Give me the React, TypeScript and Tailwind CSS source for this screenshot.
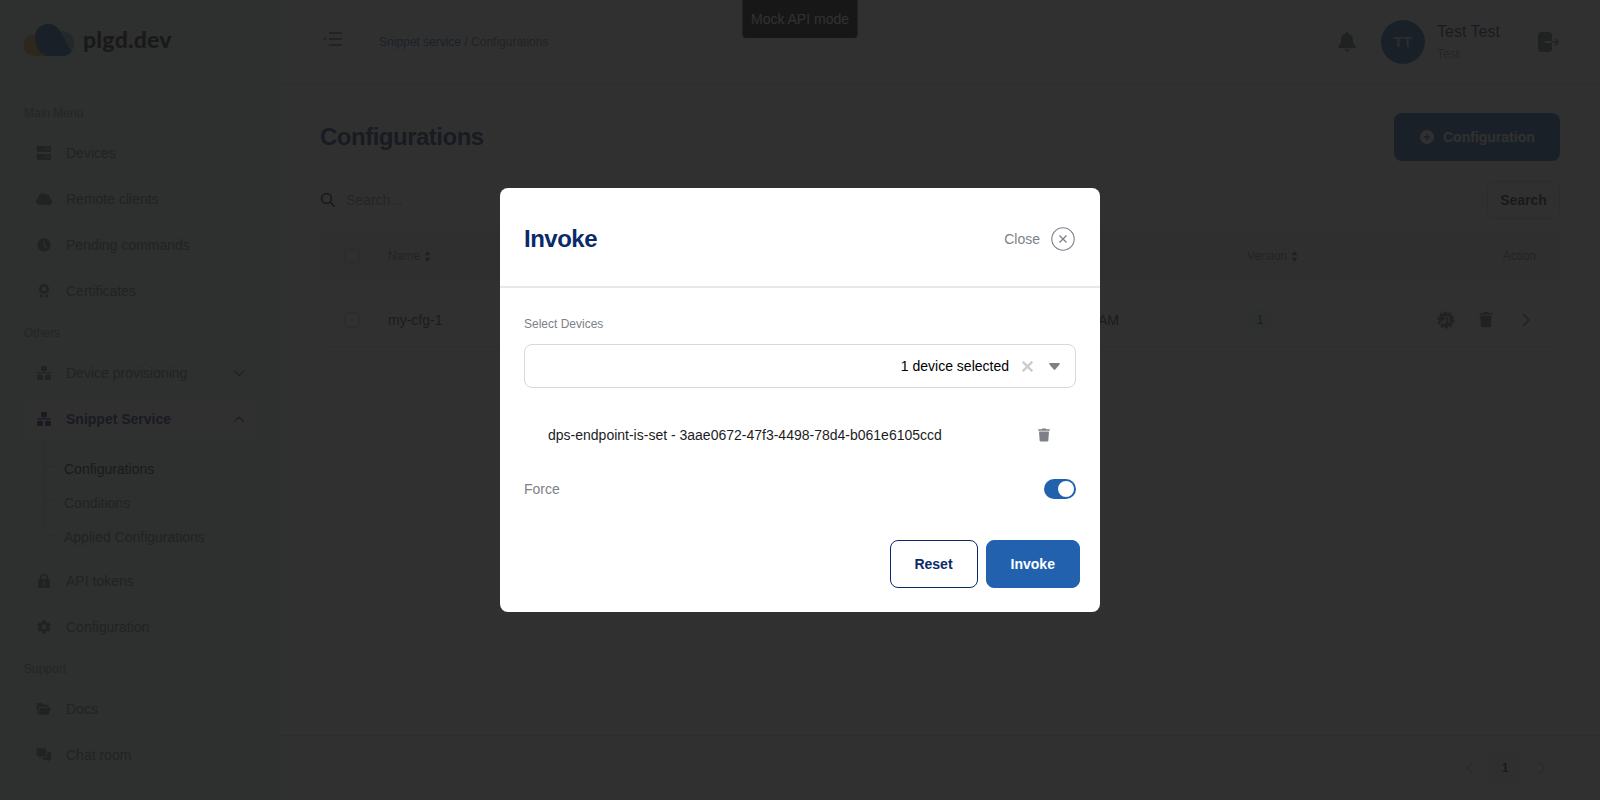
import React from 'react';

type IconProps = { className?: string };

const ServerIcon = ({ className }: IconProps) => (
  <svg width="16" height="16" viewBox="0 0 16 16" className={className}>
    <path
      fill="currentColor"
      fillRule="evenodd"
      d="M2 1h11.6a1.4 1.4 0 0 1 1.4 1.4v3.2A1.4 1.4 0 0 1 13.6 7H2A1.4 1.4 0 0 1 .6 5.600V2.400A1.400 1.400 0 0 1 2 1zm7.700 2.300v1.300H11V3.300zm2.300 0v1.300h1.300V3.300zM2 9h11.600A1.400 1.400 0 0 1 15 10.400v3.200a1.400 1.400 0 0 1-1.400 1.400H2a1.400 1.400 0 0 1-1.400-1.400v-3.200A1.400 1.400 0 0 1 2 9zm7.700 2.300v1.300H11v-1.300zm2.300 0v1.300h1.300v-1.300z"
    />
  </svg>
);

const CloudIcon = ({ className }: IconProps) => (
  <svg width="16" height="16" viewBox="0 0 16 16" className={className}>
    <path
      fill="currentColor"
      d="M3.800 14A3.700 3.700 0 0 1 2.100 7a4.500 4.500 0 0 1 7.600-3.500 3 3 0 0 1 4.100 3.700A3.500 3.500 0 0 1 12.600 14z"
    />
  </svg>
);

const ClockIcon = ({ className }: IconProps) => (
  <svg width="16" height="16" viewBox="0 0 16 16" className={className}>
    <path
      fill="currentColor"
      fillRule="evenodd"
      d="M8 1.300a6.700 6.700 0 1 1 0 13.400A6.700 6.700 0 0 1 8 1.300zM7.400 4v4.400l2.700 2.700.9-.9L8.600 7.900V4z"
    />
  </svg>
);

const CertificateIcon = ({ className }: IconProps) => (
  <svg width="16" height="16" viewBox="0 0 16 16" className={className}>
    <circle cx="8" cy="6" r="3.700" fill="none" stroke="currentColor" strokeWidth="2.800" />
    <path fill="currentColor" d="M4.300 11l3 1.500-1.300 2.500-1.200-.8-1.700.5zM11.700 11l-3 1.500 1.300 2.500 1.200-.8 1.700.5z" />
  </svg>
);

const NetworkIcon = ({ className }: IconProps) => (
  <svg width="16" height="16" viewBox="0 0 16 16" className={className}>
    <g fill="currentColor">
      <rect x="5" y="1" width="6" height="5" rx="1" />
      <rect x="1" y="10" width="6" height="5" rx="1" />
      <rect x="9" y="10" width="6" height="5" rx="1" />
      <path d="M7.400 6h1.200v1.300H15v1.200h-2.400V10h-1.200V8.500H4.600V10H3.400V8.500H1V7.300h6.400z" />
    </g>
  </svg>
);

const LockIcon = ({ className }: IconProps) => (
  <svg width="16" height="16" viewBox="0 0 16 16" className={className}>
    <path fill="none" stroke="currentColor" strokeWidth="1.600" d="M4.800 7V4.800a3.200 3.200 0 0 1 6.400 0V7" />
    <path
      fill="currentColor"
      fillRule="evenodd"
      d="M3.500 6h9A1.500 1.500 0 0 1 14 7.500v6a1.500 1.500 0 0 1-1.500 1.500h-9A1.500 1.500 0 0 1 2 13.500v-6A1.500 1.500 0 0 1 3.500 6zM8 8.500a1 1 0 0 0-.6 1.800v1.900h1.200v-1.900A1 1 0 0 0 8 8.500z"
    />
  </svg>
);

const GearIcon = ({ className }: IconProps) => (
  <svg width="16" height="16" viewBox="0 0 16 16" className={className}>
    <path
      fill="currentColor"
      fillRule="evenodd"
      d="M6.500 1.300h3l.5 1.900 1.200.7 1.900-.5 1.500 2.600-1.400 1.300v1.400l1.400 1.300-1.500 2.600-1.900-.5-1.200.7-.5 1.900h-3L6 12.800l-1.200-.7-1.900.5-1.500-2.600 1.400-1.300V7.300L1.400 6l1.500-2.600 1.900.5L6 3.200zM8 5.600a2.400 2.400 0 1 0 0 4.800 2.400 2.400 0 0 0 0-4.800z"
    />
  </svg>
);

const FolderIcon = ({ className }: IconProps) => (
  <svg width="16" height="16" viewBox="0 0 16 16" className={className}>
    <path fill="currentColor" d="M.7 12V3.300A1.300 1.300 0 0 1 2 2h3.500l1.700 1.700h4.600A1.200 1.200 0 0 1 13 5v.8H5a2.200 2.200 0 0 0-1.900 1.100z" />
    <path fill="currentColor" d="M5 6.700h10.300L12.700 13a1.200 1.200 0 0 1-1.100.7H1.200l2.700-6.300A1.200 1.200 0 0 1 5 6.700z" />
  </svg>
);

const ChatIcon = ({ className }: IconProps) => (
  <svg width="16" height="16" viewBox="0 0 16 16" className={className}>
    <path fill="currentColor" d="M1.800 1.200h7A1.200 1.200 0 0 1 10 2.400V8a1.200 1.200 0 0 1-1.200 1.200H5.900L3.200 11.300V9.200H1.800A1.200 1.200 0 0 1 .6 8V2.400a1.200 1.200 0 0 1 1.200-1.200z" />
    <path fill="currentColor" d="M11 4.700h2.900A1.200 1.200 0 0 1 15.100 6v5.500a1.200 1.200 0 0 1-1.200 1.200h-.8v2.100l-2.800-2.100H7.600a1.200 1.200 0 0 1-1.200-1.200v-1.300H9a2 2 0 0 0 2-2z" />
  </svg>
);

const Chevron = ({ d, size = 12 }: { d: string; size?: number }) => (
  <svg width={size} height={size} viewBox="0 0 12 12" fill="none" stroke="currentColor" strokeWidth="1.500" strokeLinecap="round" strokeLinejoin="round">
    <path d={d} />
  </svg>
);

const TrashIcon = ({ className }: IconProps) => (
  <svg viewBox="0 0 14 16" className={className}>
    <path fill="currentColor" d="M.3 1.400h4L5 .3h4l.7 1.100h4V3H.3zM1.200 4h11.600l-.7 10.500a1.300 1.300 0 0 1-1.300 1.200H3.200a1.300 1.300 0 0 1-1.300-1.200z" />
  </svg>
);

const SortIcon = ({ active }: { active?: boolean }) => (
  <svg width="7" height="11" viewBox="0 0 7 11">
    <path d="M3.500 0L6.700 4.300H.3z" className={active ? 'fill-[#0a7fc4]' : 'fill-[#5b6167]'} />
    <path d="M3.500 11L.3 6.700h6.400z" className="fill-[#5b6167]" />
  </svg>
);

const Logo = () => (
  <svg width="50" height="32" viewBox="0 0 50 32">
    <path fill="#e0a23c" d="M10 10.500h14V32H10.500A10.700 10.700 0 0 1 10 10.500z" />
    <path fill="#7fb0c8" d="M38 7a12.500 12.500 0 0 1 12 12.500c0 5-2 8-5.500 10.500L30 10z" />
    <path fill="#1f5ba5" d="M24 0c5.500 0 9.500 2.700 12 7l11.500 20.500C45.500 30.500 42.500 32 39 32H25C17 32 11 24 11 13 11 5.500 17 0 24 0z" />
  </svg>
);

type NavItemProps = {
  icon: React.ReactNode;
  label: string;
  active?: boolean;
  chevron?: 'up' | 'down';
};

const NavItem = ({ icon, label, active, chevron }: NavItemProps) => (
  <a
    className={
      active
        ? 'flex h-10 items-center rounded-lg bg-white pl-3 pr-[11px] text-sm font-bold text-[#0a2a69]'
        : 'flex h-10 items-center rounded-lg pl-3 pr-[11px] text-sm text-[#6a7077]'
    }
  >
    {icon}
    <span className="ml-[14px] flex-1">{label}</span>
    {chevron && (
      <span className="text-[#6a7077]">
        <Chevron d={chevron === 'up' ? 'M1.500 8.500L6 4l4.500 4.500' : 'M1.500 4L6 8.500L10.500 4'} />
      </span>
    )}
  </a>
);

const NavLabel = ({ children }: { children: React.ReactNode }) => (
  <div className="h-[42px] pt-[14px] text-xs leading-4 text-[#858a8e]">{children}</div>
);

const Sidebar = () => (
  <aside className="flex h-full w-[280px] shrink-0 flex-col bg-[#e6f5ee] px-6">
    <div className="flex h-[91px] shrink-0 items-start pt-6">
      <Logo />
      <span className="ml-[9px] mt-px font-['Lato'] text-[23px] font-black leading-7 tracking-[0.200px] text-[#1c1c1e]">plgd.dev</span>
    </div>
    <NavLabel>Main Menu</NavLabel>
    <nav className="flex flex-col gap-[6px]">
      <NavItem icon={<ServerIcon />} label="Devices" />
      <NavItem icon={<CloudIcon />} label="Remote clients" />
      <NavItem icon={<ClockIcon />} label="Pending commands" />
      <NavItem icon={<CertificateIcon />} label="Certificates" />
    </nav>
    <NavLabel>Others</NavLabel>
    <nav className="flex flex-col gap-[6px]">
      <NavItem icon={<NetworkIcon />} label="Device provisioning" chevron="down" />
      <NavItem icon={<NetworkIcon />} label="Snippet Service" active chevron="up" />
    </nav>
    <div className="flex h-[122px] shrink-0 pl-5">
      <svg width="20" height="110" viewBox="0 0 20 110" fill="none" stroke="#c6cecb">
        <path d="M.5 0v91q0 5 5 5H12M.5 22q0 5.500 5 5.500H12M.5 56q0 5.500 5 5.500H12" />
      </svg>
      <div className="pt-[13px] text-sm text-[#6a7077]">
        <div className="flex h-[34px] items-center text-[#1c1c1e]">Configurations</div>
        <div className="flex h-[34px] items-center">Conditions</div>
        <div className="flex h-[34px] items-center">Applied Configurations</div>
      </div>
    </div>
    <nav className="flex flex-col gap-[6px]">
      <NavItem icon={<LockIcon />} label="API tokens" />
      <NavItem icon={<GearIcon />} label="Configuration" />
    </nav>
    <NavLabel>Support</NavLabel>
    <nav className="flex flex-col gap-[6px]">
      <NavItem icon={<FolderIcon />} label="Docs" />
      <NavItem icon={<ChatIcon />} label="Chat room" />
    </nav>
  </aside>
);

const Header = () => (
  <header className="flex h-[85px] shrink-0 items-center border-b border-[#d9dcdf] pl-[43px] pr-10">
    <svg width="20" height="14" viewBox="0 0 20 14" className="mb-[6px] text-[#71777d]">
      <path d="M3 4.500v5L.3 7z" fill="currentColor" />
      <path d="M6 1h13M6 7h13M6 13h13" stroke="currentColor" strokeWidth="1.800" />
    </svg>
    <div className="ml-9 text-xs text-[#6a7077]">
      <span className="text-[#1f66c0]">Snippet service</span>
      <span className="text-[#303236]"> / </span>
      <span>Configurations</span>
    </div>
    <div className="ml-auto flex items-center">
      <svg width="18" height="20" viewBox="0 0 18 20" className="text-[#5f6e6a]">
        <path fill="currentColor" d="M9 0c.9 0 1.400.6 1.400 1.400C13.300 2 15 4.300 15 7.300v3.500l2.700 3.400c.5.800.3 2-.9 2H1.200c-1.200 0-1.400-1.200-.9-2L3 10.800V7.300c0-3 1.700-5.300 4.600-5.900C7.600.6 8.100 0 9 0zM6.400 17.600h5.200c-.4 1.300-1.300 2.100-2.600 2.100s-2.200-.8-2.600-2.100z" />
      </svg>
      <div className="ml-[25px] flex h-11 w-11 items-center justify-center rounded-full bg-[#2161ae] text-[15px] font-bold text-[#c9d6e6]">TT</div>
      <div className="ml-3 w-[63px] whitespace-nowrap">
        <div className="text-base leading-5 text-[#0a2a69]">Test Test</div>
        <div className="mt-1 text-xs leading-4 text-[#858a8e]">Test</div>
      </div>
      <svg width="22" height="20" viewBox="0 0 22 20" className="ml-[38px] text-[#5f6e6a]">
        <path fill="currentColor" d="M3.500 0h7A3.500 3.500 0 0 1 14 3.500V9H7v2h7v5.500a3.500 3.500 0 0 1-3.500 3.500h-7A3.500 3.500 0 0 1 0 16.500v-13A3.500 3.500 0 0 1 3.500 0z" />
        <path fill="none" stroke="currentColor" strokeWidth="1.700" strokeLinecap="round" strokeLinejoin="round" d="M14 10h6M17.300 7l3 3-3 3" />
      </svg>
    </div>
  </header>
);

const Checkbox = () => <span className="block h-4 w-4 rounded border border-[#c9cdd0]" />;

const Table = () => (
  <div className="mt-3">
    <div className="flex h-[50px] items-center rounded-lg bg-[#f5f6f7] pl-6 pr-6 text-xs text-[#777c81]">
      <Checkbox />
      <div className="ml-7 flex w-[859px] items-center gap-1">
        Name <SortIcon active />
      </div>
      <div className="flex items-center gap-1">
        Version <SortIcon />
      </div>
      <div className="ml-auto">Action</div>
    </div>
    <div className="mx-2 flex h-[66px] items-center border-b border-[#dfe2e4] pl-4 pr-[19px] pt-[13px] pb-[1px] text-sm">
      <Checkbox />
      <div className="ml-7 w-[532px] text-[#303236]">my-cfg-1</div>
      <div className="w-[199px] text-right text-[#303236]">9/4/2024 11:24 AM</div>
      <div className="ml-[127px] flex h-[21px] w-7 items-center justify-center rounded-full bg-[#eceeef] text-xs text-[#303236]">1</div>
      <div className="ml-auto flex items-center text-[#5f6e6a]">
        <svg width="18" height="18" viewBox="0 0 18 18">
          <circle cx="9" cy="9" r="7.600" fill="none" stroke="currentColor" strokeWidth="2" strokeDasharray="3.200 1.575" />
          <circle cx="9" cy="9" r="7" fill="currentColor" />
          <path d="M3.500 12.500L8.500 8M6.500 6H12v6M9.500 9L6 13" fill="none" stroke="#ffffff" strokeWidth="1.200" />
        </svg>
        <TrashIcon className="ml-6 h-[17px] w-[14px]" />
        <span className="ml-[26px]">
          <Chevron d="M4 1.500L8.500 6L4 10.500" size={14} />
        </span>
      </div>
    </div>
  </div>
);

const MainContent = () => (
  <main className="flex min-w-0 flex-1 flex-col bg-white">
    <Header />
    <div className="flex-1 px-10 pt-7">
      <div className="flex h-12 items-center justify-between">
        <h1 className="text-2xl font-bold tracking-[-0.500px] text-[#0a2a69]">Configurations</h1>
        <button className="flex h-12 w-[166px] items-center rounded-lg bg-[#2161ae] pl-[26px] text-sm font-bold text-white">
          <svg width="14" height="14" viewBox="0 0 14 14">
            <path fill="currentColor" fillRule="evenodd" d="M7 0a7 7 0 1 1 0 14A7 7 0 0 1 7 0zM6.300 4v2.300H4v1.400h2.300V10h1.400V7.700H10V6.300H7.700V4z" />
          </svg>
          <span className="ml-[9px]">Configuration</span>
        </button>
      </div>
      <div className="mt-5 flex h-[38px] items-center">
        <svg width="16" height="16" viewBox="0 0 16 16" className="text-[#1c1c1e]" fill="none" stroke="currentColor" strokeWidth="1.700">
          <circle cx="6.500" cy="6.500" r="4.900" />
          <path d="M10 10l4.500 4.700" />
        </svg>
        <span className="ml-[10px] text-sm text-[#858a8e]">Search...</span>
        <button className="ml-auto h-[38px] w-[73px] rounded-lg border border-[#d2d5d8] text-sm font-bold text-[#1c1c1e]">Search</button>
      </div>
      <Table />
    </div>
    <footer className="flex h-[65px] items-center justify-end border-t border-[#d9dcdf] pr-[51px] text-[#c2c6ca]">
      <Chevron d="M8 1.500L3.500 6L8 10.500" size={14} />
      <span className="ml-3 mr-[14px] flex h-8 w-8 items-center justify-center rounded-lg bg-[#f5f6f7] text-xs font-bold text-[#1c1c1e]">1</span>
      <Chevron d="M4 1.500L8.500 6L4 10.500" size={14} />
    </footer>
  </main>
);

const InvokeModal = () => (
  <div role="dialog" className="flex h-[424px] w-[600px] flex-col rounded-lg bg-white">
    <div className="flex h-[100px] shrink-0 items-center justify-between border-b-2 border-[#e5e8ec] px-6 pt-1">
      <h2 className="text-2xl font-bold tracking-[-0.500px] text-[#0a2a69]">Invoke</h2>
      <button className="flex items-center text-sm text-[#7d8187]">
        Close
        <svg width="24" height="24" viewBox="0 0 24 24" fill="none" stroke="currentColor" className="ml-[11px] mr-px">
          <circle cx="12" cy="12" r="11.200" strokeWidth="1.100" />
          <path d="M8.500 8.500l7 7M15.500 8.500l-7 7" strokeWidth="1.300" />
        </svg>
      </button>
    </div>
    <div className="flex flex-1 flex-col px-6 pt-7">
      <label className="text-xs leading-4 text-[#7d8187]">Select Devices</label>
      <div className="mt-3 flex h-11 items-center justify-end rounded-lg border border-[#d6d8da] pr-[15px] text-sm text-black">
        1 device selected
        <svg width="11" height="11" viewBox="0 0 11 11" className="ml-[13px]" stroke="#cccccc" strokeWidth="2.300">
          <path d="M.7.700l9.600 9.600M10.300.700l-9.600 9.600" />
        </svg>
        <svg width="11" height="7" viewBox="0 0 11 7" className="ml-4" fill="#7d8187">
          <path d="M1 0h9q1.400.2.500 1.500L6.500 6.300q-1 1-2 0L.5 1.500Q-.4.200 1 0z" />
        </svg>
      </div>
      <div className="mt-9 flex h-[22px] items-center justify-between pl-6 pr-[26px] text-sm text-[#1c1c1e]">
        dps-endpoint-is-set - 3aae0672-47f3-4498-78d4-b061e6105ccd
        <TrashIcon className="h-[14px] w-3 text-[#7d8187]" />
      </div>
      <div className="mt-[33px] flex h-5 items-center justify-between text-sm text-[#7d8187]">
        Force
        <span className="flex h-5 w-8 items-center justify-end rounded-full bg-[#2161ae] p-[2px]">
          <span className="h-4 w-4 rounded-full bg-white" />
        </span>
      </div>
      <div className="-mr-1 mt-[41px] flex justify-end gap-2 text-sm font-bold">
        <button className="h-12 w-[88px] rounded-lg border border-[#0a2a69] text-[#0a2a69]">Reset</button>
        <button className="h-12 w-[94.500px] rounded-lg border border-[#2161ae] bg-[#2161ae] text-white">Invoke</button>
      </div>
    </div>
  </div>
);

export default function App() {
  return (
    <div className="relative h-[800px] w-full overflow-hidden font-['Liberation_Sans',Arial,sans-serif]">
      <div className="flex h-full">
        <Sidebar />
        <MainContent />
      </div>
      <div className="absolute left-1/2 top-0 flex h-[38px] w-[115px] -translate-x-1/2 items-center justify-center rounded-b bg-black text-sm text-white">
        Mock API mode
      </div>
      <div className="absolute inset-0 flex items-center justify-center bg-[#191919]/90">
        <InvokeModal />
      </div>
    </div>
  );
}
